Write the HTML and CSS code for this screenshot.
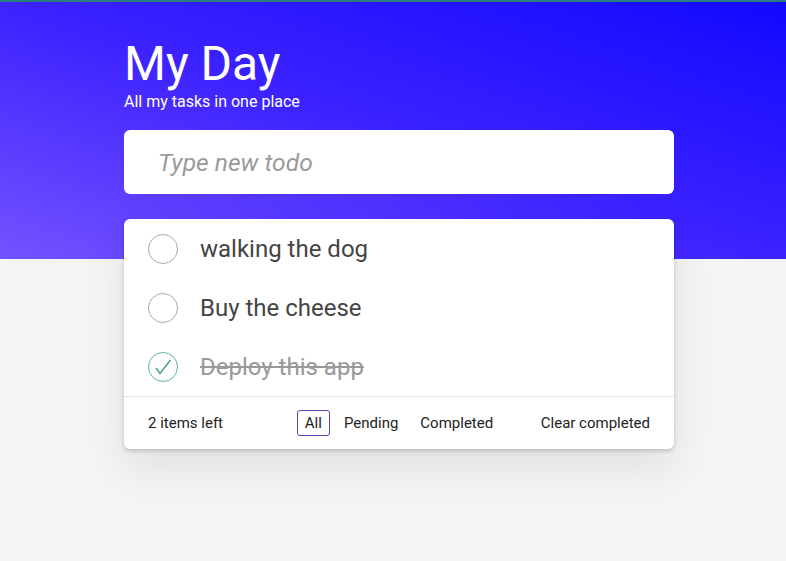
FILE: index.html
```html
<!DOCTYPE html>
<html>
<head>
<meta charset="utf-8">
<link rel="stylesheet" href="styles.css">
</head>
<body>
<div class="hero"></div>
<main class="app">
  <header class="head">
    <h1 class="title">My Day</h1>
    <p class="subtitle">All my tasks in one place</p>
  </header>
  <div class="new-todo">
    <input class="new-input" type="text" placeholder="Type new todo">
  </div>
  <section class="card">
    <ul class="list">
      <li class="item">
        <span class="check"></span>
        <span class="label">walking the dog</span>
      </li>
      <li class="item">
        <span class="check"></span>
        <span class="label">Buy the cheese</span>
      </li>
      <li class="item done">
        <span class="check checked">
          <svg viewBox="0 0 30 30" width="30" height="30"><circle cx="15" cy="15" r="14.5" fill="none" stroke="#5fb3a1" stroke-width="1"/><path d="M8 16 L12 21.5 L22.5 8" fill="none" stroke="#4aa58f" stroke-width="1.6"/></svg>
        </span>
        <span class="label">Deploy this app</span>
      </li>
    </ul>
    <footer class="footer">
      <span class="count">2 items left</span>
      <div class="filters">
        <button class="filter active">All</button>
        <button class="filter">Pending</button>
        <button class="filter">Completed</button>
      </div>
      <button class="clear">Clear completed</button>
    </footer>
  </section>
</main>
</body>
</html>
```
FILE: styles.css
```css
html, body {
  margin: 0;
  padding: 0;
}
body {
  background: #f4f4f4;
  font-family: Roboto, "Liberation Sans", sans-serif;
  border-top: 2px solid #2a7d80;
  min-height: 559px;
  position: relative;
}
.hero {
  position: absolute;
  left: 0;
  right: 0;
  top: 0;
  height: 257px;
  background: linear-gradient(to top right, #7452ff 0%, #3c22ff 50%, #1208ff 100%);
}
.app {
  position: relative;
  width: 550px;
  margin-left: calc(50% - 269px);
  padding-top: 34px;
}
.head {
  color: #fff;
}
.title {
  margin: 0;
  font-size: 48px;
  font-weight: 400;
  line-height: 56px;
}
.subtitle {
  margin: 0;
  font-size: 16px;
  line-height: 19px;
}
.new-todo {
  margin-top: 19px;
  background: #fff;
  border-radius: 6px;
  height: 64px;
  display: flex;
  align-items: center;
}
.new-input {
  border: none;
  outline: none;
  background: transparent;
  font-family: Roboto, "Liberation Sans", sans-serif;
  font-size: 24.6px;
  font-style: italic;
  padding: 0 0 0 34px;
  width: 100%;
  color: #444;
}
.new-input::placeholder {
  color: #9a9a9a;
}
.card {
  margin-top: 25px;
  background: #fff;
  border-radius: 6px;
  box-shadow: 0 2px 4px rgba(0,0,0,0.18), 0 20px 40px rgba(0,0,0,0.08);
}
.list {
  list-style: none;
  margin: 0;
  padding: 0;
  border-bottom: 1px solid #e4e4e4;
}
.item {
  height: 59px;
  display: flex;
  align-items: center;
  padding-left: 24px;
}
.check {
  width: 30px;
  height: 30px;
  border-radius: 50%;
  border: 1px solid #a8a8a8;
  box-sizing: border-box;
  flex: none;
}
.check.checked {
  border: none;
}
.check svg {
  display: block;
}
.label {
  margin-left: 22px;
  font-size: 24px;
  color: #444;
}
.done .label {
  color: #999;
  text-decoration: line-through;
}
.footer {
  height: 52px;
  display: grid;
  grid-template-columns: 1fr auto 1fr;
  align-items: center;
  padding: 0 24px;
  font-size: 15px;
  color: #222;
}
.filters {
  display: flex;
  gap: 6px;
}
.filter, .clear {
  font-family: Roboto, "Liberation Sans", sans-serif;
  font-size: 15px;
  color: #222;
  background: none;
  border: 1px solid transparent;
  border-radius: 3px;
  padding: 3px 7px;
  line-height: 18px;
  cursor: pointer;
}
.filter.active {
  border-color: #5546b8;
}
.clear {
  justify-self: end;
  border: none;
  padding: 0;
}
```
